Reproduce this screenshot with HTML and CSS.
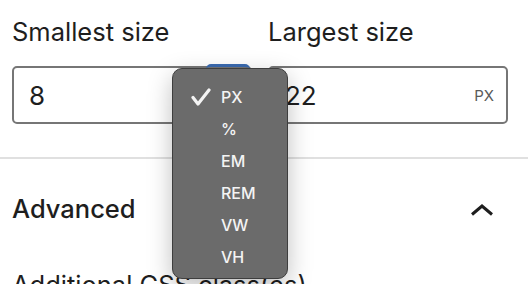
FILE: index.html
```html
<!DOCTYPE html>
<html lang="en">
<head>
    <meta charset="UTF-8">
    <meta name="viewport" content="width=device-width, initial-scale=1.0">
    <title>Typography sizes</title>
    <link rel="stylesheet" href="styles.css">
</head>
<body>
    <div class="panel">
        <!-- Fluid size inputs -->
        <div class="size-row">
            <div class="size-field">
                <label class="field-label">Smallest size</label>
                <div class="unit-input">
                    <span class="value">8</span>
                    <span class="unit-select"></span>
                </div>
            </div>
            <div class="size-field">
                <label class="field-label">Largest size</label>
                <div class="unit-input">
                    <span class="value">22</span>
                    <span class="unit">PX</span>
                </div>
            </div>
        </div>
    </div>

    <div class="divider"></div>

    <div class="panel">
        <div class="section-head">
            <span class="section-title">Advanced</span>
            <svg class="chevron" width="24" height="14" viewBox="0 0 24 14">
                <polyline points="2,11.5 12,3 22,11.5" fill="none" stroke="#1e1e1e" stroke-width="3"/>
            </svg>
        </div>
        <div class="field-label">Additional CSS class(es)</div>
    </div>

    <!-- Native unit popup, opened -->
    <ul class="unit-menu">
        <li class="selected">
            <svg class="check" width="20" height="18" viewBox="0 0 20 18">
                <polyline points="2,9.5 7,16 18,2" fill="none" stroke="#f4f4f4" stroke-width="3.2" stroke-linecap="round" stroke-linejoin="round"/>
            </svg>
            PX
        </li>
        <li>%</li>
        <li>EM</li>
        <li>REM</li>
        <li>VW</li>
        <li>VH</li>
    </ul>
</body>
</html>
```

FILE: styles.css
```css
body {
    margin: 0;
    font-family: Inter, "Noto Sans", sans-serif;
    color: #1e1e1e;
    background: #fff;
    height: 284px;
    overflow: hidden;
    position: relative;
}

.panel {
    padding: 0 20px 0 12px;
}

.size-row {
    display: grid;
    grid-template-columns: 1fr 1fr;
    gap: 16px;
    padding-top: 17px;
    padding-bottom: 33px;
}

.field-label {
    display: block;
    font-size: 25.5px;
    line-height: 30px;
    margin-bottom: 19px;
    white-space: nowrap;
}

.unit-input {
    position: relative;
    display: flex;
    align-items: center;
    height: 58px;
    box-sizing: border-box;
    border: 2px solid #767676;
    border-radius: 5px;
    padding: 0 12px 0 15px;
}

.value {
    flex: 1;
    font-size: 26px;
}

.unit {
    font-size: 15px;
    color: #5a5a5a;
}

/* focused unit select of the first input */
.unit-select {
    position: absolute;
    right: 0;
    top: -4px;
    width: 44px;
    height: 40px;
    border-top: 3px solid #3b6bb0;
    border-radius: 5px 5px 0 0;
}

.divider {
    height: 2px;
    background: #e0e0e0;
}

.section-head {
    display: flex;
    align-items: center;
    justify-content: space-between;
    height: 99px;
    padding-right: 14px;
    margin-bottom: 12px;
}

.section-title {
    font-size: 25.5px;
    font-weight: 500;
}

.chevron {
    margin-top: 2px;
}

.unit-menu {
    position: absolute;
    left: 172px;
    top: 68px;
    width: 116px;
    height: 211px;
    box-sizing: border-box;
    margin: 0;
    padding: 12px 0 0 48px;
    list-style: none;
    background: #6b6b6b;
    border: 1px solid #3e3e3e;
    border-radius: 10px;
    box-shadow: 0 8px 24px rgba(0, 0, 0, 0.25);
}

.unit-menu li {
    position: relative;
    height: 32px;
    line-height: 32px;
    font-size: 16px;
    font-weight: 500;
    color: #f4f4f4;
}

.check {
    position: absolute;
    left: -30px;
    top: 7px;
}
```
